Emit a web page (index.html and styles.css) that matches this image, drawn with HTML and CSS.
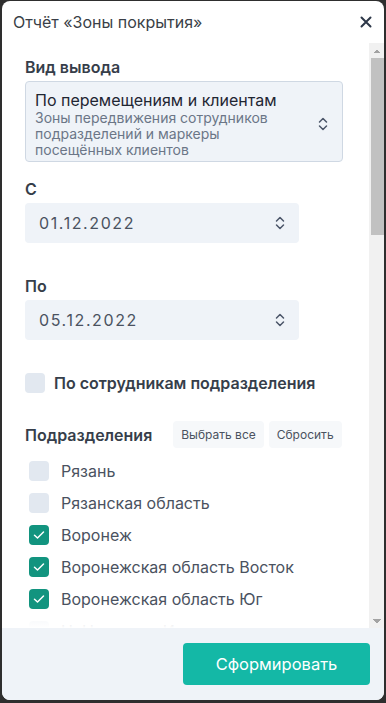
FILE: index.html
```html
<!DOCTYPE html>
<html lang="ru">
<head>
<meta charset="utf-8">
<title>Отчёт «Зоны покрытия»</title>
<link rel="stylesheet" href="styles.css">
</head>
<body>
<div class="window">
  <header class="head">
    <span class="title">Отчёт «Зоны покрытия»</span>
    <svg class="close" width="12" height="12" viewBox="0 0 12 12"><path d="M1.5 1.5 L10.5 10.5 M10.5 1.5 L1.5 10.5" stroke="#2d3748" stroke-width="2" stroke-linecap="round"/></svg>
  </header>
  <div class="scroll-wrap">
    <div class="scroll">
      <div class="label">Вид вывода</div>
      <div class="select">
        <div class="select-text">
          <div class="select-title">По перемещениям и клиентам</div>
          <div class="select-sub">Зоны передвижения сотрудников подразделений и маркеры посещённых клиентов</div>
        </div>
        <svg class="chev" width="10" height="16" viewBox="0 0 10 16"><path d="M1.5 6 L5 2.5 L8.5 6 M1.5 10 L5 13.5 L8.5 10" fill="none" stroke="#4a5568" stroke-width="1.5" stroke-linecap="round" stroke-linejoin="round"/></svg>
      </div>

      <div class="label label-gap">С</div>
      <div class="date">
        <span class="date-text">01.12.2022</span>
        <svg class="chev" width="10" height="16" viewBox="0 0 10 16"><path d="M1.5 6 L5 2.5 L8.5 6 M1.5 10 L5 13.5 L8.5 10" fill="none" stroke="#4a5568" stroke-width="1.5" stroke-linecap="round" stroke-linejoin="round"/></svg>
      </div>

      <div class="label label-gap2">По</div>
      <div class="date">
        <span class="date-text">05.12.2022</span>
        <svg class="chev" width="10" height="16" viewBox="0 0 10 16"><path d="M1.5 6 L5 2.5 L8.5 6 M1.5 10 L5 13.5 L8.5 10" fill="none" stroke="#4a5568" stroke-width="1.5" stroke-linecap="round" stroke-linejoin="round"/></svg>
      </div>

      <label class="check-row">
        <span class="box"></span>
        <span class="check-label">По сотрудникам подразделения</span>
      </label>

      <div class="dept-head">
        <span class="dept-title">Подразделения</span>
        <button class="small-btn first">Выбрать все</button>
        <button class="small-btn">Сбросить</button>
      </div>

      <ul class="list">
        <li class="item"><span class="box"></span>Рязань</li>
        <li class="item"><span class="box"></span>Рязанская область</li>
        <li class="item"><span class="box on"><svg width="12" height="10" viewBox="0 0 12 10"><path d="M1.5 5.2 L4.5 8 L10.5 2" fill="none" stroke="#fff" stroke-width="1.5" stroke-linecap="round" stroke-linejoin="round"/></svg></span>Воронеж</li>
        <li class="item"><span class="box on"><svg width="12" height="10" viewBox="0 0 12 10"><path d="M1.5 5.2 L4.5 8 L10.5 2" fill="none" stroke="#fff" stroke-width="1.5" stroke-linecap="round" stroke-linejoin="round"/></svg></span>Воронежская область Восток</li>
        <li class="item"><span class="box on"><svg width="12" height="10" viewBox="0 0 12 10"><path d="M1.5 5.2 L4.5 8 L10.5 2" fill="none" stroke="#fff" stroke-width="1.5" stroke-linecap="round" stroke-linejoin="round"/></svg></span>Воронежская область Юг</li>
        <li class="item"><span class="box"></span>Н. Новгород Иванов</li>
      </ul>
    </div>
    <div class="scrollbar" aria-hidden="true">
      <span class="sb-btn up"></span>
      <span class="sb-thumb"></span>
      <span class="sb-rest"></span>
      <span class="sb-btn down"></span>
    </div>
  </div>
  <footer class="foot">
    <button class="primary">Сформировать</button>
  </footer>
</div>
</body>
</html>
```

FILE: styles.css
```css
* { box-sizing: border-box; }
html, body { margin: 0; padding: 0; }
body {
  background: #2e2e2e;
  font-family: Inter, "Noto Sans", sans-serif;
  width: 386px;
  height: 703px;
  overflow: hidden;
}
.window {
  margin: 1px 2px 0 2px;
  height: 699px;
  background: #fff;
  border-radius: 8px;
  display: flex;
  flex-direction: column;
  overflow: hidden;
}
.head {
  height: 42px;
  flex: none;
  display: flex;
  align-items: center;
  justify-content: space-between;
  padding: 0 12px 0 11px;
}
.title {
  font-size: 16px;
  color: #3a3f47;
}
.close { display: block; }
.scroll-wrap {
  flex: 1;
  min-height: 0;
  display: flex;
  position: relative;
}
.scroll {
  flex: 1;
  min-width: 0;
  overflow: hidden;
  padding: 14px 26px 0 23px;
  position: relative;
}
.scroll::after {
  content: "";
  position: absolute;
  left: 0;
  right: 0;
  bottom: 0;
  height: 14px;
  background: linear-gradient(rgba(255,255,255,0.6), #fff);
  pointer-events: none;
}
.scrollbar {
  flex: none;
  width: 15px;
  background: #f1f1f1;
  display: flex;
  flex-direction: column;
}
.sb-btn {
  flex: none;
  height: 15px;
  background-repeat: no-repeat;
  background-position: center;
  background-size: 8px 4px;
}
.sb-btn.up {
  background-image: conic-gradient(from 135deg at 50% 0, #a3a3a3 90deg, transparent 0);
}
.sb-btn.down {
  background-image: conic-gradient(from -45deg at 50% 100%, #a3a3a3 90deg, transparent 0);
}
.sb-thumb {
  flex: none;
  height: 177px;
  margin-left: 2px;
  background: #c1c1c1;
}
.sb-rest { flex: 1; }
.label {
  font-size: 16px;
  font-weight: 600;
  line-height: 20px;
  color: #363e4a;
  margin-bottom: 4px;
}
.label-gap { margin-top: 17px; }
.label-gap2 { margin-top: 33px; }
.select {
  background: #eff3f8;
  border: 1px solid #cfd8e3;
  border-radius: 4px;
  padding: 8px 14px 3px 9px;
  display: flex;
  align-items: center;
  justify-content: space-between;
}
.select-title {
  font-size: 16px;
  line-height: 20px;
  color: #1f2633;
}
.select-sub {
  font-size: 14px;
  line-height: 16px;
  color: #6b7687;
  width: 250px;
}
.date {
  width: 274px;
  height: 40px;
  background: #eff3f8;
  border-radius: 4px;
  display: flex;
  align-items: center;
  justify-content: space-between;
  padding: 0 14px 0 14px;
}
.date-text {
  font-size: 16px;
  letter-spacing: 1.6px;
  color: #4a5260;
}
.chev { display: block; flex: none; }
.check-row {
  display: flex;
  align-items: center;
  margin-top: 33px;
  height: 20px;
}
.box {
  width: 20px;
  height: 20px;
  border-radius: 4px;
  background: #e2e8f0;
  flex: none;
  display: flex;
  align-items: center;
  justify-content: center;
}
.box.on { background: #12947f; }
.check-label {
  margin-left: 9px;
  font-size: 16px;
  font-weight: 600;
  color: #363e4a;
  white-space: nowrap;
}
.dept-head {
  display: flex;
  align-items: center;
  margin-top: 28px;
  height: 27px;
}
.dept-title {
  font-size: 16px;
  font-weight: 600;
  color: #363e4a;
  margin-right: 21px;
  white-space: nowrap;
}
.small-btn {
  flex: none;
  white-space: nowrap;
  border: none;
  background: #f6f8fa;
  border-radius: 4px;
  height: 27px;
  padding: 0 8px;
  font-family: inherit;
  font-size: 12px;
  color: #4a5260;
}
.small-btn.first { margin-right: 5px; }
.list {
  list-style: none;
  margin: 7px 0 0;
  padding: 0 0 0 4px;
}
.item {
  height: 32px;
  display: flex;
  align-items: center;
  font-size: 16px;
  color: #4a5260;
  white-space: nowrap;
}
.item .box { margin-right: 12px; }
.foot {
  flex: none;
  height: 72px;
  background: #eff3f8;
  display: flex;
  justify-content: flex-end;
  padding: 15px 14px 0 0;
}
.primary {
  width: 187px;
  height: 42px;
  border: none;
  border-radius: 4px;
  background: #14b8a6;
  color: #fff;
  font-family: inherit;
  font-size: 16.5px;
}
```
